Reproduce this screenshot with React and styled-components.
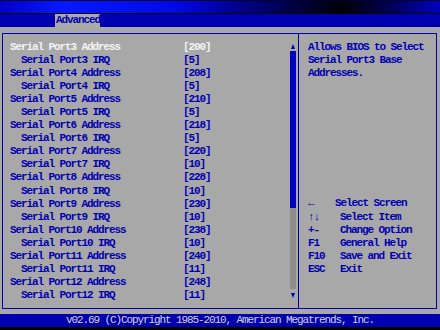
import React from "react";
import styled, { createGlobalStyle } from "styled-components";

const GlobalStyle = createGlobalStyle`
  html, body {
    margin: 0;
    padding: 0;
    background: #000000;
  }
`;

const Screen = styled.div`
  width: 440px;
  height: 330px;
  display: flex;
  flex-direction: column;
  background: #000000;
  font-family: "Liberation Mono", "DejaVu Sans Mono", monospace;
  font-size: 11px;
  font-weight: bold;
  letter-spacing: -1.1px;
  line-height: 13px;
  overflow: hidden;
`;

const TitleBar = styled.div`
  height: 12px;
  border-top: 1px solid #000030;
  border-bottom: 1px solid #000000;
  background: linear-gradient(
    90deg,
    #0000c8 0%,
    #0818ff 14%,
    #0008e8 40%,
    #00009a 52%,
    #000030 70%,
    #000008 78%,
    #000060 90%,
    #0000c0 100%
  );
`;

const MenuBar = styled.div`
  height: 13px;
  background: #0000b0;
  display: flex;
  padding-left: 55px;
`;

const Tab = styled.span`
  background: #aaaaaa;
  color: #0000b0;
  width: 44px;
  padding-left: 1px;
  line-height: 13px;
`;

const Main = styled.div`
  height: 287px;
  background: #a8a8a8;
  padding: 6px 3px 5px 2px;
  box-sizing: border-box;
`;

const Frame = styled.div`
  height: 100%;
  box-sizing: border-box;
  border: 1px solid #0000b0;
  display: grid;
  grid-template-columns: 296px 1fr;
`;

const LeftPanel = styled.div`
  border-right: 1px solid #0000b0;
  display: grid;
  grid-template-columns: 1fr 9px;
`;

const List = styled.div`
  padding: 6.5px 0 0 7px;
`;

const Row = styled.div`
  display: flex;
  height: 13.1px;
  line-height: 13.1px;
  white-space: nowrap;
  color: ${(p) => (p.$active ? "#f4f4f4" : "#0000b0")};
`;

const Label = styled.span`
  width: ${(p) => (p.$indent ? 162 : 173)}px;
  padding-left: ${(p) => (p.$indent ? 11 : 0)}px;
`;

const Value = styled.span``;

const Scroll = styled.div`
  display: flex;
  flex-direction: column;
  align-items: flex-start;
  padding: 10px 0 10px 1px;
`;

const Arrow = styled.span`
  width: 0;
  height: 0;
  margin-left: 1px;
  border-left: 2.5px solid transparent;
  border-right: 2.5px solid transparent;
  ${(p) =>
    p.$down
      ? "border-top: 5px solid #0000b0;"
      : "border-bottom: 5px solid #0000b0;"}
`;

const Track = styled.div`
  flex: 1;
  width: 6px;
  margin: 2px 0 4px;
  background: #8c8c8c;
  display: flex;
  flex-direction: column;
`;

const Thumb = styled.div`
  background: #0000c0;
  border-right: 1px solid #0000e0;
  box-sizing: border-box;
`;

const RightPanel = styled.div`
  display: flex;
  flex-direction: column;
  padding: 6.5px 0 32px 9px;
  color: #0000b0;
`;

const HelpLine = styled.div`
  height: 13.1px;
  line-height: 13.1px;
  white-space: nowrap;
`;

const Legend = styled.div`
  margin-top: auto;
`;

const KeyRow = styled.div`
  display: flex;
  height: 13.1px;
  line-height: 13.1px;
  white-space: nowrap;
`;

const Key = styled.span`
  width: ${(p) => (p.$short ? 27 : 32)}px;
`;

const Footer = styled.div`
  height: 13px;
  background: #0000b0;
  color: #d4d4d4;
  text-align: center;
  line-height: 13px;
  font-weight: normal;
  white-space: nowrap;
`;

const irqs = [5, 5, 5, 5, 10, 10, 10, 10, 11, 11];

const rows = [];
for (let n = 3; n <= 12; n++) {
  const addr = (0x200 + (n - 3) * 8).toString(16).toUpperCase();
  rows.push({ label: `Serial Port${n} Address`, value: `[${addr}]` });
  rows.push({ label: `Serial Port${n} IRQ`, value: `[${irqs[n - 3]}]`, indent: true });
}

const help = ["Allows BIOS to Select", "Serial Port3 Base", "Addresses."];

const keys = [
  { key: "\u2190", text: "Select Screen", short: true },
  { key: "\u2191\u2193", text: "Select Item" },
  { key: "+-", text: "Change Option" },
  { key: "F1", text: "General Help" },
  { key: "F10", text: "Save and Exit" },
  { key: "ESC", text: "Exit" },
];

export default function App() {
  return (
    <>
      <GlobalStyle />
      <Screen>
        <TitleBar />
        <MenuBar>
          <Tab>Advanced</Tab>
        </MenuBar>
        <Main>
          <Frame>
            <LeftPanel>
              <List>
                {rows.map((r, i) => (
                  <Row key={r.label} $active={i === 0}>
                    <Label $indent={r.indent}>{r.label}</Label>
                    <Value>{r.value}</Value>
                  </Row>
                ))}
              </List>
              <Scroll>
                <Arrow />
                <Track>
                  <Thumb style={{ height: `${(156 / 236) * 100}%` }} />
                </Track>
                <Arrow $down />
              </Scroll>
            </LeftPanel>
            <RightPanel>
              {help.map((h) => (
                <HelpLine key={h}>{h}</HelpLine>
              ))}
              <Legend>
                {keys.map((k) => (
                  <KeyRow key={k.key}>
                    <Key $short={k.short}>{k.key}</Key>
                    <span>{k.text}</span>
                  </KeyRow>
                ))}
              </Legend>
            </RightPanel>
          </Frame>
        </Main>
        <Footer>v02.69 (C)Copyright 1985-2010, American Megatrends, Inc.</Footer>
      </Screen>
    </>
  );
}
